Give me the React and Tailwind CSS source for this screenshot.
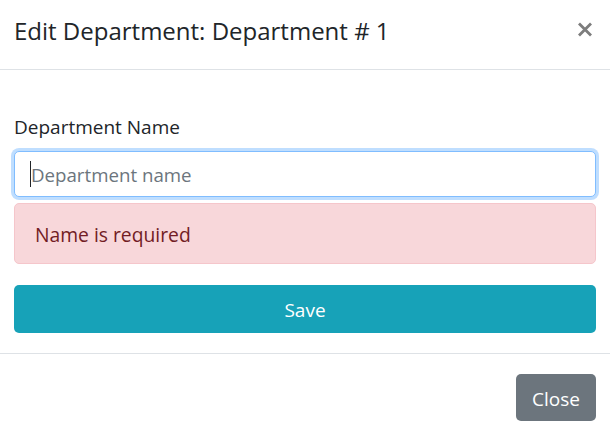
const font = { fontFamily: '"Open Sans", "Noto Sans", sans-serif' };

const App = () => {
  return (
    <div className="w-[610px] h-[434px] bg-white overflow-hidden text-[#212529]" style={font}>
      <div className="flex items-start justify-between px-[14px] pt-[13px] pb-[20px] border-b border-[#dee2e6]">
        <h5 className="text-[24px] leading-[36px] font-normal">Edit Department: Department # 1</h5>
        <button aria-label="Close" className="mt-[9px] mr-[3px]">
          <svg width="16" height="15" viewBox="0 0 16 15">
            <path d="M2 1.5 L14 13.5 M14 1.5 L2 13.5" stroke="#7d7d7d" strokeWidth="2.8" fill="none" />
          </svg>
        </button>
      </div>

      <div className="px-[14px] pt-[44px] pb-[20px]">
        <label className="block text-[19px] leading-[27px] mb-[10px]">Department Name</label>
        <div className="relative">
          <input
            className="block w-full h-[46px] rounded-[5px] border border-[#80bdff] bg-white pl-[16px] text-[18.7px] outline-none shadow-[0_0_0_3px_rgba(0,123,255,0.25)] placeholder:text-[#6c757d]"
            placeholder="Department name"
          />
          <span className="absolute left-[16px] top-[10px] w-px h-[26px] bg-[#212529]" />
        </div>
        <div className="mt-[6px] h-[61px] flex items-center pl-[20px] pt-[3px] rounded-[5px] border border-[#f5c6cb] bg-[#f8d7da] text-[#721c24] text-[19.3px]">
          Name is required
        </div>
        <button className="mt-[21px] w-full h-[48px] pt-[2px] rounded-[5px] bg-[#17a2b8] text-white text-[19px]">
          Save
        </button>
      </div>

      <div className="flex justify-end px-[14px] pt-[20px] border-t border-[#dee2e6]">
        <button className="w-[80px] h-[47px] pt-[3px] rounded-[5px] bg-[#6c757d] text-white text-[19px]">
          Close
        </button>
      </div>
    </div>
  );
};

export default App;
